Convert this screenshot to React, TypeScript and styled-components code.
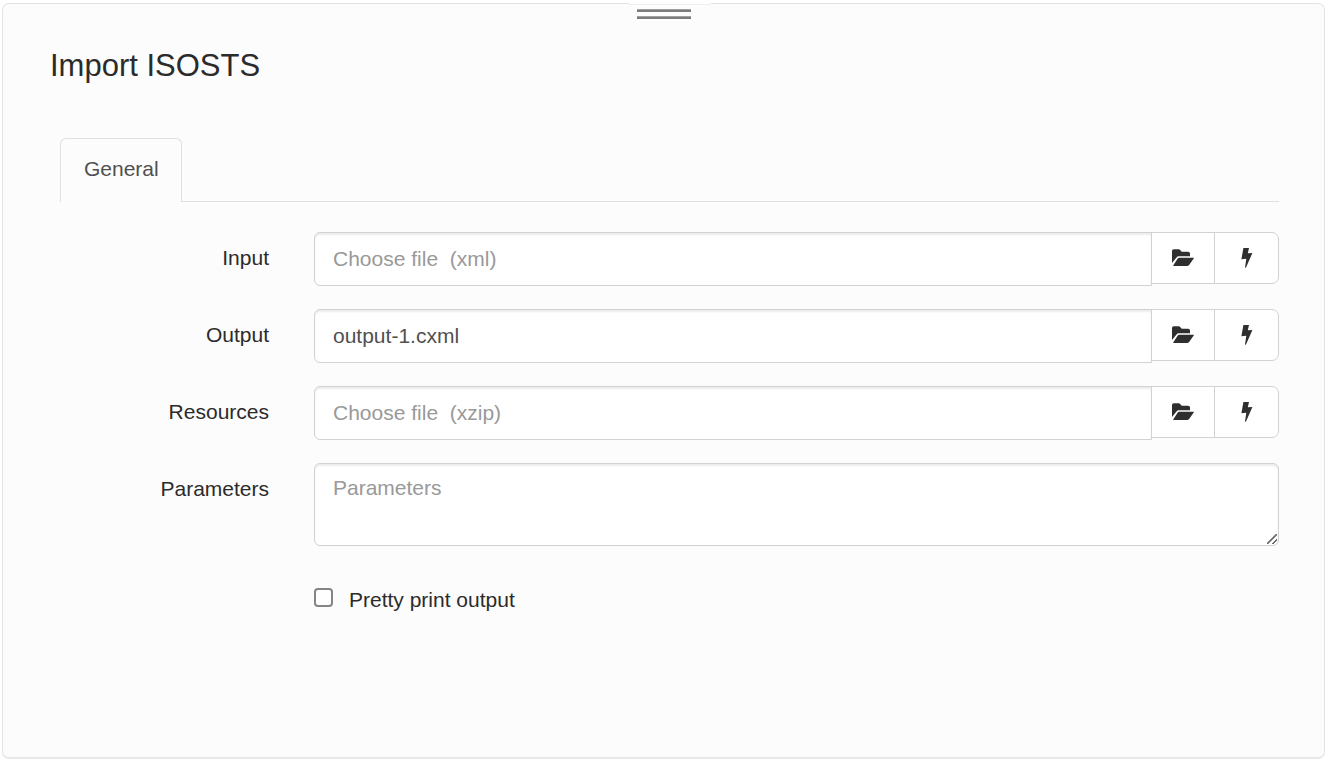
import React, { useState } from "react";
import styled, { createGlobalStyle } from "styled-components";

const GlobalStyle = createGlobalStyle`
  *, *::before, *::after { box-sizing: border-box; }
  body {
    margin: 0;
    background: #fff;
    color: #2b2b2b;
    font: 21px/30px "Liberation Sans", Arial, sans-serif;
  }
`;

const Page = styled.div`
  min-height: 100vh;
  display: flex;
  padding: 3px 3px 1px 2px;
`;

const Panel = styled.main`
  flex: 1;
  min-width: 0;
  position: relative;
  padding: 40px 45px 40px 47px;
  background: #fcfcfc;
  border: 1px solid #e3e3e3;
  border-bottom: 2px solid #e8e8e8;
  border-radius: 7px;
`;

const DragHandle = styled.button`
  position: absolute;
  top: 0;
  left: 50%;
  transform: translateX(-50%);
  margin: -1px 0 0 6px;
  width: 82px;
  height: 20px;
  padding: 5px 20px 0 8px;
  border: 0;
  border-top: 1px solid #fff;
  background: #fcfcfc;
  box-shadow: inset 0 1px 0 #efefef;
  cursor: row-resize;
  display: flex;
  flex-direction: column;
  justify-content: flex-start;
  gap: 4px;
`;

const HandleBar = styled.span`
  width: 100%;
  height: 3px;
  flex: none;
  background: #7b7b7b;
  border-top: 1px solid #a0a0a0;
`;

const Title = styled.h1`
  margin: 0;
  font-size: 31px;
  line-height: 44px;
  font-weight: 400;
`;

const Content = styled.div`
  padding: 50px 0 0 10px;
`;

const TabList = styled.div`
  display: flex;
  border-bottom: 1px solid #e0e0e0;
`;

const Tab = styled.button`
  height: 64px;
  margin-bottom: -1px;
  padding: 0 22px 3px 23px;
  border: 1px solid #e0e0e0;
  border-bottom: 0;
  border-radius: 6px 6px 0 0;
  background: #fcfcfc;
  color: #505050;
  font: inherit;
`;

const Form = styled.form`
  display: flex;
  flex-direction: column;
  gap: 23px;
  padding-top: 30px;
`;

const Row = styled.div`
  display: grid;
  grid-template-columns: 209px minmax(0, 1fr);
  column-gap: 45px;
  align-items: start;
`;

const Label = styled.label`
  padding-top: 11px;
  text-align: right;
`;

const InputGroup = styled.div`
  display: flex;
  align-items: flex-start;
  height: 54px;
`;

const TextField = styled.input`
  flex: 1;
  min-width: 0;
  height: 54px;
  padding: 0 18px;
  border: 1px solid #d2d2d2;
  border-radius: 6px 0 0 6px;
  background: #fff;
  box-shadow: inset 0 2px 2px rgba(0, 0, 0, 0.08);
  color: #505050;
  font: inherit;
  &::placeholder { color: #999; opacity: 1; }
`;

const AddonButton = styled.button<{ $last?: boolean }>`
  width: ${(p) => (p.$last ? 65 : 64)}px;
  height: 52px;
  margin-left: -1px;
  padding: 0;
  display: flex;
  align-items: center;
  justify-content: center;
  border: 1px solid #d2d2d2;
  border-radius: ${(p) => (p.$last ? "0 7px 7px 0" : "0")};
  background: #fff;
  color: #2f2f2f;
`;

const TextArea = styled.textarea`
  display: block;
  width: 100%;
  height: 83px;
  padding: 9px 18px;
  border: 1px solid #d2d2d2;
  border-radius: 6px;
  background: #fff;
  box-shadow: inset 0 2px 2px rgba(0, 0, 0, 0.08);
  color: #505050;
  font: inherit;
  resize: vertical;
  &::placeholder { color: #999; opacity: 1; }
  &::-webkit-resizer {
    background: linear-gradient(
        135deg,
        transparent 43%,
        #666 46%,
        #666 54%,
        transparent 57%,
        transparent 71%,
        #666 74%,
        #666 81%,
        transparent 84%
      )
      right 1px bottom 1px / 10px 10px no-repeat;
  }
`;

const CheckLabel = styled.label`
  grid-column: 2;
  display: flex;
  align-items: flex-start;
  gap: 16px;
  padding-top: 16px;
`;

const CheckBox = styled.input`
  appearance: none;
  flex: none;
  width: 19px;
  height: 19px;
  margin: 3px 0 0;
  border: 2px solid #858585;
  border-radius: 4px;
  background: #fff;
  &:checked { background: #0075ff; border-color: #0075ff; }
`;

const FolderOpenIcon = () => (
  <svg width="22" height="18" viewBox="0 0 22 18" fill="currentColor" aria-hidden="true">
    <path d="M0 2Q0 .2 1.800 .2H6.400Q7.800 .2 8.600 1.400L9.700 2.800H16Q18 2.800 18 4.600V7.300H6.600Q5.500 7.300 4.700 8.200L0 14Z" />
    <path d="M7.200 8.800H21.500Q22.300 8.800 21.700 9.600L17.300 15.800Q16.400 17 15 17H1.700Q.9 17 1.400 16.200L5.700 9.600Q6.300 8.800 7.200 8.800Z" />
  </svg>
);

const BoltIcon = () => (
  <svg width="12" height="20" viewBox="0 0 12 20" fill="currentColor" aria-hidden="true">
    <path d="M2.400 0H8L6.800 5.300L11.400 4.900L4.900 19.700L4 19.500L5.300 10.700L.4 11.300Z" />
  </svg>
);

interface FileRowProps {
  id: string;
  label: string;
  placeholder?: string;
  initial?: string;
}

function FileRow({ id, label, placeholder, initial = "" }: FileRowProps) {
  const [value, setValue] = useState(initial);
  return (
    <Row>
      <Label htmlFor={id}>{label}</Label>
      <InputGroup>
        <TextField
          id={id}
          type="text"
          placeholder={placeholder}
          value={value}
          onChange={(e) => setValue(e.target.value)}
        />
        <AddonButton type="button" aria-label={`Browse ${label}`}>
          <FolderOpenIcon />
        </AddonButton>
        <AddonButton type="button" $last aria-label={`Actions ${label}`}>
          <BoltIcon />
        </AddonButton>
      </InputGroup>
    </Row>
  );
}

export default function App() {
  return (
    <>
      <GlobalStyle />
      <Page>
        <Panel>
          <DragHandle type="button" aria-label="Resize panel">
            <HandleBar />
            <HandleBar />
          </DragHandle>
          <Title>Import ISOSTS</Title>
          <Content>
            <TabList role="tablist">
              <Tab type="button" role="tab" aria-selected="true">General</Tab>
            </TabList>
            <Form>
              <FileRow id="input" label="Input" placeholder="Choose file  (xml)" />
              <FileRow id="output" label="Output" initial="output-1.cxml" />
              <FileRow id="resources" label="Resources" placeholder="Choose file  (xzip)" />
              <Row>
                <Label htmlFor="parameters">Parameters</Label>
                <TextArea id="parameters" placeholder="Parameters" />
              </Row>
              <Row>
                <CheckLabel>
                  <CheckBox type="checkbox" />
                  Pretty print output
                </CheckLabel>
              </Row>
            </Form>
          </Content>
        </Panel>
      </Page>
    </>
  );
}
